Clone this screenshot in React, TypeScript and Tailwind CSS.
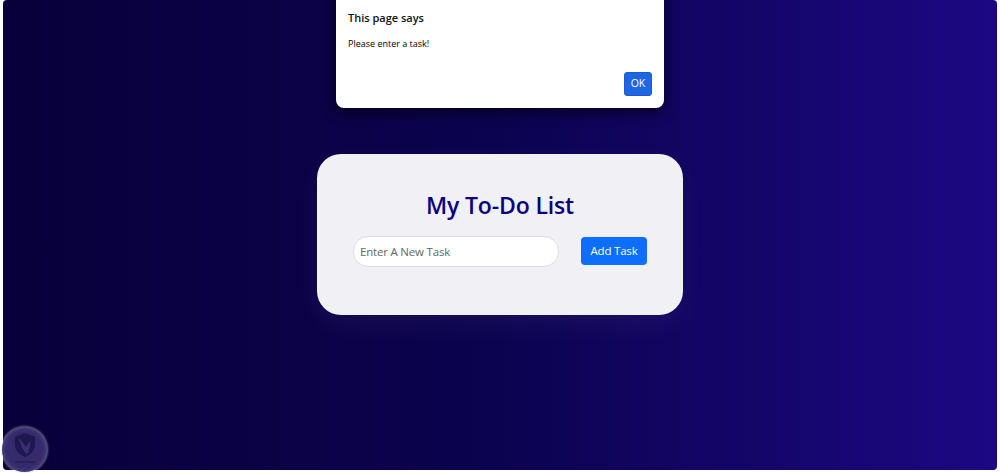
export default function App() {
  const font = { fontFamily: '"Open Sans", "Noto Sans", sans-serif' };
  return (
    <div className="relative w-[1000px] h-[473px] bg-white overflow-hidden px-[3px] pb-[3px]" style={font}>
      <div className="relative w-[994px] h-[470px] rounded-[4px] overflow-hidden bg-gradient-to-r from-[#08003a] via-[#0c0350] to-[#1c0883] flex items-center justify-center">
        <div className="absolute left-[333px] top-[-20px] w-[328px] h-[128px] bg-white rounded-[8px] shadow-[0_4px_14px_rgba(0,0,0,0.65)] px-3 pt-[30px]">
          <div className="text-[11px] leading-[15px] font-semibold text-[#111]">This page says</div>
          <div className="text-[9px] leading-[14px] mt-[12px] text-black">Please enter a task!</div>
          <button className="absolute right-3 bottom-[12px] w-[28px] h-[24px] rounded-[3px] bg-[#1f66e5] border border-[#1a5cd0] text-white text-[10.5px]">OK</button>
        </div>

        <div className="w-[366px] h-[161px] -mt-[1px] bg-[#f1f1f5] rounded-[24px] shadow-[0_10px_30px_rgba(255,255,255,0.05)] px-9 pt-[34px]">
          <h1 className="text-center text-[23px] tracking-[-0.15px] leading-[34px] font-semibold text-[#0a0080]">My To-Do List</h1>
          <div className="flex items-start justify-between mt-[14px]">
            <div className="w-[206px] h-[31px] bg-white rounded-[15px] border border-[#dcdce2] flex items-center px-[6px] text-[11.5px] tracking-[-0.2px] text-[#666]">Enter A New Task</div>
            <button className="w-[66px] h-[28px] mt-[1px] bg-[#0d6efd] rounded-[4px] text-white text-[11.5px] tracking-[-0.2px]">Add Task</button>
          </div>
        </div>
      </div>

      <div className="absolute left-[2px] top-[427px] w-[45px] h-[45px] rounded-full bg-[#352a6c] shadow-[inset_0_0_5px_#5a5590,0_0_3px_#c4e2bd] flex flex-col items-center justify-center">
        <svg viewBox="0 0 24 28" className="w-[22px] h-[26px] mt-[-4px]">
          <path d="M12 1 L23 5 V13 C23 20 18 25 12 27 C6 25 1 20 1 13 V5 Z" fill="#1d1850" />
          <path d="M5 6 C7 14 10 20 14 24 C17 20 18 14 18 9 L13 16 C11 13 8 9 5 6 Z" fill="#3a2f72" />
        </svg>
        <div className="w-[20px] h-[2px] mt-[3px] bg-[#272158]" />
      </div>
    </div>
  );
}
